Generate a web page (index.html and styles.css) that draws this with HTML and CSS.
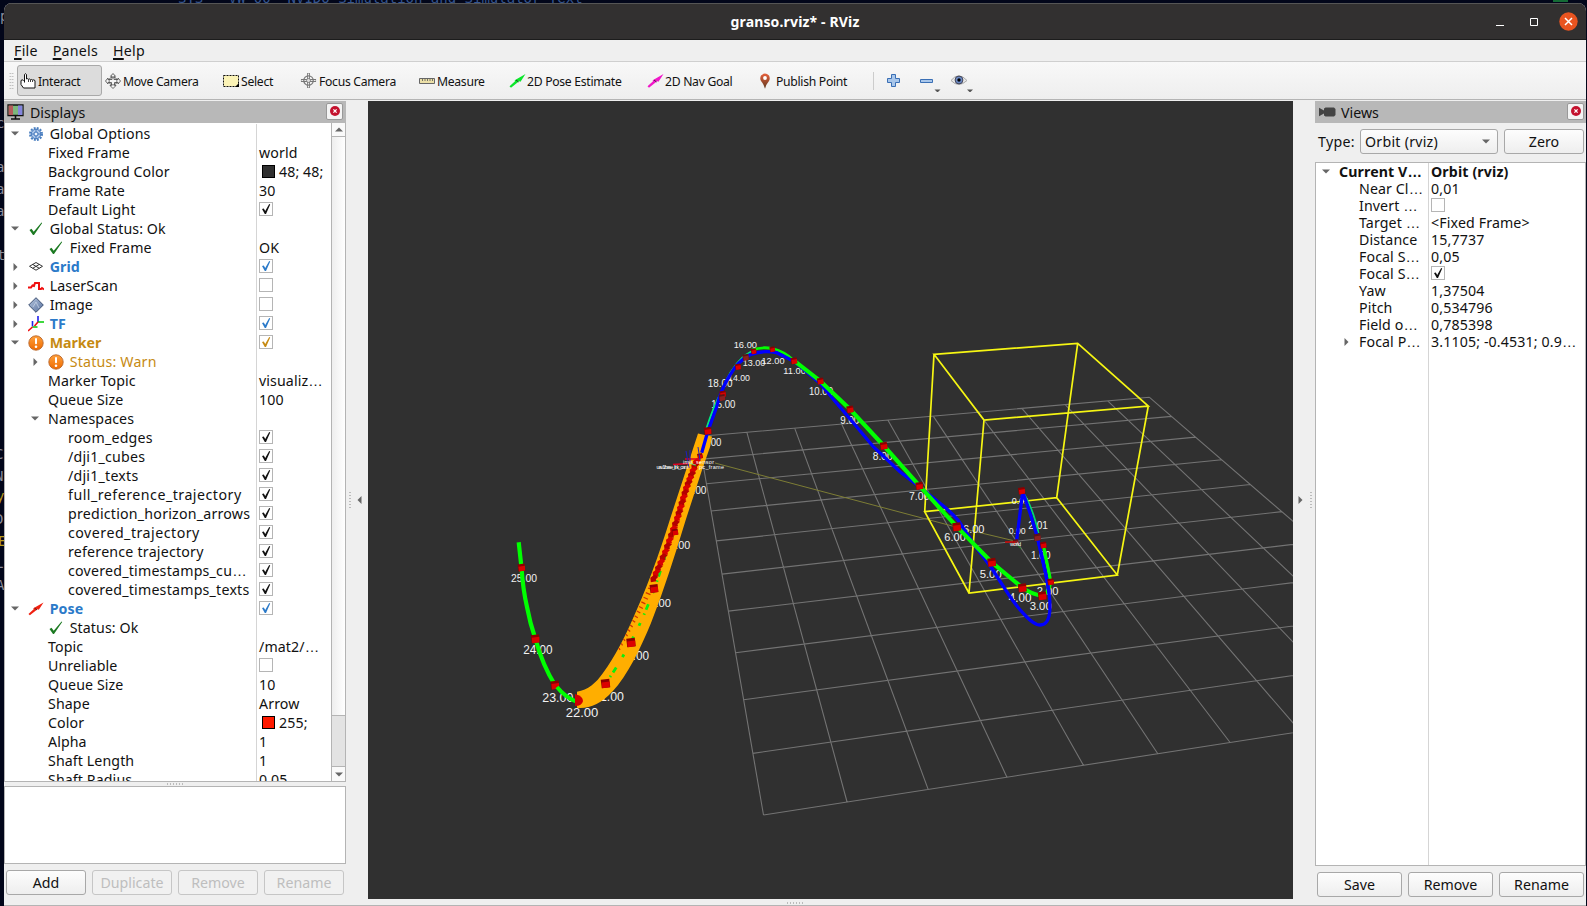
FILE: index.html
```html
<!DOCTYPE html>
<html lang="en">
<head>
<meta charset="utf-8">
<title>granso.rviz* - RViz</title>
<link rel="stylesheet" href="styles.css">
</head>
<body>
<svg class="defs" width="0" height="0">
  <defs>
    <linearGradient id="orange" x1="0" y1="0" x2="0" y2="1"><stop offset="0" stop-color="#ffa13d"/><stop offset="1" stop-color="#ee6a00"/></linearGradient>
    <linearGradient id="pin" x1="0" y1="0" x2="0" y2="1"><stop offset="0" stop-color="#e8603c"/><stop offset="1" stop-color="#5c3a20"/></linearGradient>
    <linearGradient id="gem" x1="0" y1="0" x2="1" y2="1"><stop offset="0" stop-color="#b8c8e0"/><stop offset="1" stop-color="#566f9c"/></linearGradient>
  </defs>
  <symbol id="down" viewBox="0 0 8 5"><path d="M0 .5h8L4 4.5z" fill="#666"/></symbol>
  <symbol id="right" viewBox="0 0 5 8"><path d="M.5 0v8L4.5 4z" fill="#666"/></symbol>
  <symbol id="tick" viewBox="0 0 14 14"><path d="M3 7l1.8-.6 1.4 2.6L10.2 2l1 .4L7 12H5.8z" fill="currentColor"/></symbol>
  <symbol id="ok" viewBox="0 0 16 16"><path d="M1.500 9l2-1.200 2.200 3L13.500 1.500l.7.6L6 14H5z" fill="#1c7a22"/></symbol>
  <symbol id="warn" viewBox="0 0 16 16"><circle cx="8" cy="8" r="7.200" fill="url(#orange)" stroke="#b8652a" stroke-width=".9"/><rect x="7" y="3" width="2" height="6.300" rx="1" fill="#fff"/><circle cx="8" cy="11.800" r="1.300" fill="#fff"/></symbol>
  <symbol id="gear" viewBox="0 0 16 16"><circle cx="8" cy="8" r="6" fill="none" stroke="#4a7fc0" stroke-width="2" stroke-dasharray="1.9 1.25"/><circle cx="8" cy="8" r="4.800" fill="#a9c4e8" stroke="#3f75bb"/><circle cx="8" cy="8" r="2" fill="#eef4fc" stroke="#3f75bb"/><path d="M8 3.400v2.600M8 10v2.600M3.400 8H6M10 8h2.600" stroke="#3f75bb" stroke-width=".8"/></symbol>
  <symbol id="grid" viewBox="0 0 16 16"><path d="M8 3.500l6.500 3.800L8 11.200 1.500 7.300zM4.700 5.400l6.600 3.900M11.300 5.400L4.700 9.300" fill="none" stroke="#333"/></symbol>
  <symbol id="laser" viewBox="0 0 16 16"><path d="M0 9.500h3l1.500-2 1.500.5 1-3h4v6h2l1-1 2 1.500" fill="none" stroke="#f01010" stroke-width="2"/></symbol>
  <symbol id="image" viewBox="0 0 16 16"><path d="M8 .7L15.300 8 8 15.300.7 8z" fill="url(#gem)" stroke="#3d5072"/><path d="M5 10l3-5 3 6" fill="none" stroke="#c4d0e4" stroke-width=".8"/></symbol>
  <symbol id="tf" viewBox="0 0 16 16"><path d="M4.500 5v5.500M10 0v6" stroke="#2222ee" stroke-width="1.600"/><path d="M4.500 11h5M10 6h6" stroke="#0c0" stroke-width="1.600"/><path d="M4.500 11L0 15M10 6l-3.500 4" stroke="#e11" stroke-width="1.600"/></symbol>
  <symbol id="arrow" viewBox="0 0 17 16"><path d="M.5 13.200l5.500-5-.3-1L16.500 1l-5 7.800-1.400-.6L2 14.700z" fill="currentColor"/><path d="M7 7l2.500 2" stroke="#222" stroke-width=".8"/></symbol>
  <symbol id="target" viewBox="0 0 18 18"><path d="M9 1v16M1 9h16" stroke="#777" stroke-width="3"/><path d="M9 1.500v15M1.500 9h15" stroke="#eee" stroke-width="1.200"/><circle cx="9" cy="9" r="5" fill="none" stroke="#777" stroke-width="1.300"/><circle cx="9" cy="9" r="2.200" fill="#ddd" stroke="#777"/></symbol>
  <symbol id="close" viewBox="0 0 10 10"><circle cx="5" cy="5" r="5" fill="#c4122e"/><path d="M3.400 3.400l3.200 3.200M6.600 3.400L3.400 6.600" stroke="#fff" stroke-width="1.300"/></symbol>
</svg>

<div class="desktop">
  <span class="code" style="left:0;top:8px">p</span>
  <span class="code" style="left:-4px;top:115px">c</span>
  <span class="code" style="left:-4px;top:159px">a</span>
  <span class="code" style="left:-4px;top:181px">a</span>
  <span class="code" style="left:-4px;top:203px">a</span>
  <span class="code" style="left:-3px;top:247px">t</span>
  <span class="code" style="left:-5px;top:446px">C</span>
  <span class="code" style="left:-5px;top:468px">N</span>
  <span class="code gold" style="left:-4px;top:488px">y</span>
  <span class="code" style="left:-5px;top:511px">D</span>
  <span class="code gold" style="left:-2px;top:533px">E</span>
  <span class="code" style="left:-5px;top:555px">L</span>
  <span class="code" style="left:-4px;top:577px">A</span>
  <span class="code topline">STS &nbsp; VW 00 &nbsp;NVIDO Simulation and Simulator Text</span>
  <span class="sliver"></span>
</div>

<div class="window">
  <header class="titlebar">
    <span class="title">granso.rviz* - RViz</span>
    <div class="controls">
      <svg width="8" height="12"><path d="M0 9.500h8" stroke="#fff"/></svg>
      <svg width="8" height="8"><path d="M.5.5h7v7h-7z" fill="none" stroke="#fff"/></svg>
      <svg width="19" height="19"><circle cx="9.500" cy="9.500" r="9.200" fill="#e95420"/><path d="M6 6l7 7M13 6l-7 7" stroke="#fff" stroke-width="1.500"/></svg>
    </div>
  </header>
  <nav class="menubar"><span><u>F</u>ile</span><span><u>P</u>anels</span><span><u>H</u>elp</span></nav>
  <div class="toolbar">
    <i class="grip"></i>
    <div class="tool on t1"><svg width="16" height="16"><path d="M4.500 9.500V1.500q1-1.600 2 0V6q1.200-.8 2 .3 1.300-.8 2 .4 1.200-.6 2 .3 1.400-.6 2.500.6V15H3.500L1 11.500V7.500l1.500-.8 1 1.300" fill="#fff" stroke="#111"/><path d="M8.500 6.500V9M10.500 7v2M12.500 7.300V9" stroke="#111" stroke-width=".8"/></svg><span>Interact</span></div>
    <div class="tool t2"><svg width="16" height="16"><path d="M8 .5l2.500 2.800H9v3.200h4V5l2.500 3L13 11V9.500H9.500v3H11L8 15.500 5 12.500h1.500v-3H3V11L.5 8 3 5v1.500h4V3.300H5.500z" fill="#f5f5f5" stroke="#555" stroke-width=".9"/><circle cx="8" cy="8" r="4" fill="none" stroke="#555" stroke-width=".8"/></svg><span>Move Camera</span></div>
    <div class="tool t3"><svg width="16" height="16"><path d="M.5 2.500h15v11H.5z" fill="#fbf3b6" stroke="#111" stroke-dasharray="2 1"/><path d="M16 10v4h-4z"/></svg><span>Select</span></div>
    <div class="tool t4"><svg width="17" height="17"><use href="#target"/></svg><span>Focus Camera</span></div>
    <div class="tool t5"><svg width="16" height="16"><path d="M.5 5.500h15v5H.5z" fill="#ece0a8" stroke="#666"/><path d="M3.500 6v2M6 6v2M8.500 6v2M11 6v2M13.500 6v2" stroke="#555" stroke-width=".8"/></svg><span>Measure</span></div>
    <div class="tool t6 green"><svg width="17" height="16"><use href="#arrow"/></svg><span>2D Pose Estimate</span></div>
    <div class="tool t7 pink"><svg width="17" height="16"><use href="#arrow"/></svg><span>2D Nav Goal</span></div>
    <div class="tool t8"><svg width="16" height="16"><path d="M8 15.800Q7 11.500 4 8 2.500 5.500 4 2.500 8-1.500 12 2.500 13.500 5.500 12 8 9 11.500 8 15.800z" fill="url(#pin)"/><circle cx="8" cy="5" r="1.900" fill="#fff"/></svg><span>Publish Point</span></div>
    <i class="sep"></i>
    <svg class="plus" width="13" height="13"><path d="M4.500.5h4v4h4v4h-4v4h-4v-4h-4v-4h4z" fill="#a8c6ea" stroke="#3a6fb5"/></svg>
    <svg class="minus" width="21" height="22"><path d="M.5 9.500h12v3H.500z" fill="#a8c6ea" stroke="#3a6fb5"/><path d="M14.500 19.500h6l-3 3z" fill="#555"/></svg>
    <svg class="eye" width="22" height="22"><path d="M0 10.500Q7.500 1 16 10.500 7.500 18.500 0 10.500z" fill="#e8e8e8" stroke="#aaa"/><circle cx="8" cy="10" r="3.900" fill="#6d8cc8" stroke="#445"/><circle cx="8" cy="10" r="1.700"/><path d="M16 19.500h6l-3 3z" fill="#555"/></svg>
  </div>

  <main class="work">
    <section class="dock displays">
      <div class="dockhead">
        <svg width="17" height="16"><path d="M1 1h15v10.500H1z" fill="#7db87d" stroke="#111" stroke-width="1.300"/><path d="M1.600 1.600H6V11H1.600z" fill="#b55c5c"/><path d="M11 1.600h4.400V11H11z" fill="#8585dd"/><path d="M8.500 12v2.500M4 15h9" stroke="#111" stroke-width="1.600"/></svg>
        <span>Displays</span>
        <b class="x"><svg width="10" height="10"><use href="#close"/></svg></b>
      </div>
      <div class="treebox">
        <div class="tree">
          <div class="row"><div class="n"><svg class="dn"><use href="#down"/></svg><svg class="ic"><use href="#gear"/></svg>Global Options</div><div class="v"></div></div>
          <div class="row"><div class="n c">Fixed Frame</div><div class="v">world</div></div>
          <div class="row"><div class="n c">Background Color</div><div class="v"><i class="sw dark"></i>48; 48;</div></div>
          <div class="row"><div class="n c">Frame Rate</div><div class="v">30</div></div>
          <div class="row"><div class="n c">Default Light</div><div class="v"><i class="cb"><svg><use href="#tick"/></svg></i></div></div>
          <div class="row"><div class="n"><svg class="dn"><use href="#down"/></svg><svg class="ic"><use href="#ok"/></svg>Global Status: Ok</div><div class="v"></div></div>
          <div class="row"><div class="n ci"><svg class="ic"><use href="#ok"/></svg>Fixed Frame</div><div class="v">OK</div></div>
          <div class="row blue"><div class="n"><svg class="rt"><use href="#right"/></svg><svg class="ic"><use href="#grid"/></svg>Grid</div><div class="v"><i class="cb"><svg><use href="#tick"/></svg></i></div></div>
          <div class="row"><div class="n"><svg class="rt"><use href="#right"/></svg><svg class="ic"><use href="#laser"/></svg>LaserScan</div><div class="v"><i class="cb"></i></div></div>
          <div class="row"><div class="n"><svg class="rt"><use href="#right"/></svg><svg class="ic"><use href="#image"/></svg>Image</div><div class="v"><i class="cb"></i></div></div>
          <div class="row blue"><div class="n"><svg class="rt"><use href="#right"/></svg><svg class="ic"><use href="#tf"/></svg>TF</div><div class="v"><i class="cb"><svg><use href="#tick"/></svg></i></div></div>
          <div class="row amber"><div class="n"><svg class="dn"><use href="#down"/></svg><svg class="ic"><use href="#warn"/></svg>Marker</div><div class="v"><i class="cb"><svg><use href="#tick"/></svg></i></div></div>
          <div class="row amber light"><div class="n in"><svg class="rt"><use href="#right"/></svg><svg class="ic"><use href="#warn"/></svg>Status: Warn</div><div class="v"></div></div>
          <div class="row"><div class="n c">Marker Topic</div><div class="v">visualiz<em>…</em></div></div>
          <div class="row"><div class="n c">Queue Size</div><div class="v">100</div></div>
          <div class="row"><div class="n in ns"><svg class="dn"><use href="#down"/></svg>Namespaces</div><div class="v"></div></div>
          <div class="row"><div class="n g">room_edges</div><div class="v"><i class="cb"><svg><use href="#tick"/></svg></i></div></div>
          <div class="row"><div class="n g">/dji1_cubes</div><div class="v"><i class="cb"><svg><use href="#tick"/></svg></i></div></div>
          <div class="row"><div class="n g">/dji1_texts</div><div class="v"><i class="cb"><svg><use href="#tick"/></svg></i></div></div>
          <div class="row"><div class="n g wide">full_reference_trajectory</div><div class="v"><i class="cb"><svg><use href="#tick"/></svg></i></div></div>
          <div class="row"><div class="n g">prediction_horizon_arrows</div><div class="v"><i class="cb"><svg><use href="#tick"/></svg></i></div></div>
          <div class="row"><div class="n g wide">covered_trajectory</div><div class="v"><i class="cb"><svg><use href="#tick"/></svg></i></div></div>
          <div class="row"><div class="n g">reference trajectory</div><div class="v"><i class="cb"><svg><use href="#tick"/></svg></i></div></div>
          <div class="row"><div class="n g">covered_timestamps_cu<em>…</em></div><div class="v"><i class="cb"><svg><use href="#tick"/></svg></i></div></div>
          <div class="row"><div class="n g">covered_timestamps_texts</div><div class="v"><i class="cb"><svg><use href="#tick"/></svg></i></div></div>
          <div class="row blue"><div class="n"><svg class="dn"><use href="#down"/></svg><svg class="ic red"><use href="#arrow"/></svg>Pose</div><div class="v"><i class="cb"><svg><use href="#tick"/></svg></i></div></div>
          <div class="row"><div class="n ci"><svg class="ic"><use href="#ok"/></svg>Status: Ok</div><div class="v"></div></div>
          <div class="row"><div class="n c">Topic</div><div class="v">/mat2/<em>…</em></div></div>
          <div class="row"><div class="n c">Unreliable</div><div class="v"><i class="cb"></i></div></div>
          <div class="row"><div class="n c">Queue Size</div><div class="v">10</div></div>
          <div class="row"><div class="n c">Shape</div><div class="v">Arrow</div></div>
          <div class="row"><div class="n c">Color</div><div class="v"><i class="sw redsw"></i>255;</div></div>
          <div class="row"><div class="n c">Alpha</div><div class="v">1</div></div>
          <div class="row"><div class="n c">Shaft Length</div><div class="v">1</div></div>
          <div class="row"><div class="n c">Shaft Radius</div><div class="v">0,05</div></div>
        </div>
        <div class="scroll"><div class="sb"><svg width="8" height="5" class="flip"><use href="#down"/></svg></div><div class="track"></div><div class="handle"></div><div class="sb bot"><svg width="8" height="5"><use href="#down"/></svg></div></div>
      </div>
      <div class="split"><i></i></div>
      <div class="info"></div>
      <div class="buttons"><button>Add</button><button disabled>Duplicate</button><button disabled>Remove</button><button disabled>Rename</button></div>
    </section>
    <div class="gutter left"><i></i><svg width="5" height="8" class="mirror"><use href="#right"/></svg></div>
    <svg class="scene" viewBox="368 101 925 798" width="925" height="798">
      <g id="gridlines" stroke="#737373" stroke-width="1.100" fill="none"></g>
      <path d="M715 463L956 527L1015 541" stroke="#7d7d35" fill="none"/>
      <g stroke="#f6f613" stroke-width="1.700" fill="none">
        <path d="M934 354.300L1077.700 343.300 1148.300 406 984 420zM924.700 511.700L1056.700 497.700 1117.300 575 969 593zM934 354.300L924.700 511.700M1077.700 343.300L1056.700 497.700M1148.300 406L1117.300 575M984 420L969 593"/>
      </g>
      <g id="labels" fill="#f2f2f2"></g>
      <path d="M577 691.700C588 690 596 683 603 673 616 655 623 640 630.500 624 646 590 658 558 670.700 517L698 433.500 712 436.500 710 447 702 470 685.700 520C675 555 664 590 651 623 641 647 628 675 612 692 601 704 589 709 577 707.800z" fill="#ffae00"/>
      <g stroke="#0cf00c" fill="none" stroke-width="2.800" stroke-dasharray="1.500 4 6 12 3 9">
        <path d="M610 677Q645 625 665 556"/>
      </g>
      <g id="chain"></g>
      <path d="M518.700 542.300L521.500 567.700Q523 590 527 607 530 623 535.300 638.700 543 666 555 685" stroke="#0f0" stroke-width="4.200" fill="none"/>
      <path d="M706 430Q714 405 721 393 729 370 744 356L753 350.500" stroke="#00e880" stroke-width="2" fill="none"/>
      <path d="M752 350Q762 346.500 772 348.500 784 351 794 360.700" stroke="#0f0" stroke-width="2.800" fill="none"/>
      <path d="M1022 491Q1032 505 1038.500 533" stroke="#00d870" stroke-width="1.800" fill="none"/>
      <path d="M1043.300 545L1050.700 581.700Q1049 593 1042.300 595.700" stroke="#0f0" stroke-width="3.300" fill="none"/>
      <path d="M701.700 452.700L707.700 431.700 716.700 406.700Q721 389 730 375 738 361 750 354.700 762 350 776.700 352.700L794 361.300 820 383.300 836.700 403.300 853.300 422.700 873.300 446.700 900 471.700 919.300 486.700 940 503.300Q950 511 958 520L973 543 991.700 568.300 1006.700 591.700Q1016 606 1023.300 613.300 1031 622 1037 624.500 1050 628 1050 606 1050 595 1045.700 573.300L1037.300 536.700 1030 513 1022.700 491.700 1016.700 540" stroke="#00f" stroke-width="3.300" fill="none"/>
      <path d="M794 360.700L820.300 381 850 409.300 884 446 919.300 485.700 956.700 526.700 991.700 562.300 1022.300 587.700Q1031 594 1042.300 596" stroke="#0f0" stroke-width="4.100" fill="none"/>
      <path d="M1044.500 553L1050 577" stroke="#0f0" stroke-width="2.500"/>
      <path d="M1037.300 537L1045.700 573.300 1049 593" stroke="#00f" stroke-width="3.200" fill="none"/>
      <g id="cubes"></g>
      <path d="M557 687Q565 697 576 701.500" stroke="#0f0" stroke-width="4" fill="none"/>
      <path d="M575 694Q583 696 583 701 582 706 575 706z" fill="#d00000"/>
      <path d="M1005 542h10" stroke="#c00" stroke-width="1.500"/><path d="M1016 543l5 6" stroke="#1a7a1a"/>
      <g class="frames"><path d="M673 464.500l16-1M685 459h14" stroke="#e00020" stroke-width="1.600"/><path d="M686 451l3 17M690 450v12M698 447l2 13" stroke="#2020c0"/><path d="M690 463l6 3" stroke="#18b018"/>
        <text x="656.500" y="469" textLength="32">uav1/base_link_cam</text><text x="699" y="469" textLength="25">pc_frame</text><text x="683" y="464" textLength="31">imu_sensor</text><text x="1010" y="546" textLength="11">world</text></g>
    </svg>
    <div class="gutter right"><svg width="5" height="8"><use href="#right"/></svg><i></i></div>
    <section class="dock views">
      <div class="dockhead"><svg width="17" height="10"><path d="M0 .8l5 2.700V1.500L6.500.5H15l1.500 1.500v6L15 9.500H6.500L5 8.500v-2L0 9.200z" fill="#444"/></svg><span>Views</span><b class="x"><svg width="10" height="10"><use href="#close"/></svg></b></div>
      <div class="typerow"><span>Type:</span><div class="combo">Orbit (rviz)<svg width="8" height="5"><use href="#down"/></svg></div><button>Zero</button></div>
      <div class="vtree">
        <div class="row bold"><div class="n"><svg class="dn"><use href="#down"/></svg>Current V<em>…</em></div><div class="v">Orbit (rviz)</div></div>
        <div class="row"><div class="n c">Near Cl<em>…</em></div><div class="v">0,01</div></div>
        <div class="row"><div class="n c">Invert&nbsp;<em>…</em></div><div class="v"><i class="cb"></i></div></div>
        <div class="row"><div class="n c">Target&nbsp;<em>…</em></div><div class="v">&lt;Fixed Frame&gt;</div></div>
        <div class="row"><div class="n c">Distance</div><div class="v">15,7737</div></div>
        <div class="row"><div class="n c">Focal S<em>…</em></div><div class="v">0,05</div></div>
        <div class="row"><div class="n c">Focal S<em>…</em></div><div class="v"><i class="cb"><svg><use href="#tick"/></svg></i></div></div>
        <div class="row"><div class="n c">Yaw</div><div class="v">1,37504</div></div>
        <div class="row"><div class="n c">Pitch</div><div class="v">0,534796</div></div>
        <div class="row"><div class="n c">Field o<em>…</em></div><div class="v">0,785398</div></div>
        <div class="row"><div class="n in"><svg class="rt"><use href="#right"/></svg>Focal P<em>…</em></div><div class="v">3.1105; -0.4531; 0.9<em>…</em></div></div>
        <div class="rest"><div class="n"></div><div class="v"></div></div>
      </div>
      <div class="buttons"><button>Save</button><button>Remove</button><button>Rename</button></div>
    </section>
  </main>
  <footer class="status"><i></i></footer>
</div>
<script src="scene.js"></script>
</body>
</html>
```
FILE: styles.css
```css
* { box-sizing: border-box; }
body { margin: 0; width: 1587px; height: 906px; overflow: hidden; background: #02061a; font-family: "Noto Sans", "Open Sans", sans-serif; font-size: 14.2px; color: #111; }
.defs { position: absolute; }
.desktop { position: absolute; inset: 0; overflow: hidden; }
.code { position: absolute; font: 14px/17px "DejaVu Sans Mono", monospace; color: #8a8d9c; }
.gold { color: #b99a1c; }
.topline { left: 178px; top: -10px; color: #35558f; white-space: pre; }
.sliver { position: absolute; left: 1553px; top: 0; width: 15px; height: 2px; background: #146b35; }
.window { position: relative; margin: 3px 1px 0 4px; height: 903px; border-radius: 8px 8px 0 0; overflow: hidden; background: #efefef; display: flex; flex-direction: column; }
.titlebar { height: 37px; flex: none; background: #323030; border-top: 1px solid #555; border-bottom: 1px solid #1c1c1c; display: grid; grid-template-columns: 1fr; align-items: center; }
.title { grid-area: 1/1; text-align: center; color: #fff; font-weight: 700; font-size: 14px; letter-spacing: .15px; padding-right: 0; }
.controls { grid-area: 1/1; justify-self: end; display: flex; align-items: center; gap: 25px; padding-right: 8px; }
.controls svg:nth-child(1) { margin-right: 1px; }
.controls svg:nth-child(2) { margin-right: -4px; }
.controls svg:nth-child(1), .controls svg:nth-child(2) { flex: none; }
.menubar { height: 22px; flex: none; border-bottom: 1px solid #cfcfcf; display: flex; gap: 15px; padding-left: 10px; line-height: 21px; letter-spacing: .25px; }
.menubar u { text-underline-offset: 2px; text-decoration-thickness: 1.500px; }
.toolbar { height: 38px; flex: none; display: flex; align-items: center; border-bottom: 1px solid #b4b4b4; background: linear-gradient(#f8f8f8, #eeeeee); font-size: 12.2px; letter-spacing: -.3px; }
.grip { width: 5px; height: 17px; margin-left: 5px; background: radial-gradient(circle, #b5b5b5 .7px, transparent .9px) 0 0/2.500px 3px; }
.tool { height: 31px; display: flex; align-items: center; gap: 2px; white-space: nowrap; flex: none; padding-left: 2px; border: 1px solid transparent; }
.tool.on { background: #dcdcdc; border-color: #a9a9a9; border-radius: 3px; }
.t1 { width: 85px; margin-left: 3px; }
.t2 { width: 118px; }
.t3 { width: 77px; }
.t4 { width: 119px; }
.t5 { width: 90px; }
.t6 { width: 138px; gap: 1px; }
.t7 { width: 110px; gap: 1px; }
.t8 { width: 119px; gap: 3px; }
.green { color: #0ce62c; } .pink { color: #f018c8; }
.tool span { color: #111; padding-top: 1px; }
.sep { width: 1px; height: 18px; background: #ccc; }
.plus { margin-left: 13px; flex: none; }
.minus { margin-left: 20px; flex: none; }
.eye { margin-left: 10px; flex: none; }
.work { flex: 1; display: flex; min-height: 0; }
.dock { display: flex; flex-direction: column; flex: none; padding-top: 1px; }
.displays { width: 342px; }
.views { width: 271px; }
.dockhead { height: 22px; flex: none; background: #b8b8b8; display: flex; align-items: center; gap: 5px; padding-left: 3px; padding-right: 3px; }
.displays .dockhead span { padding-left: 1px; }
.views .dockhead { padding-right: 2px; padding-left: 4px; }
.x { margin: -2px 0 0 auto; width: 17px; height: 17px; background: #f4f4f4; border: 1px solid #999; border-radius: 2px; display: grid; place-items: center; }
.treebox { height: 659px; flex: none; display: flex; border: 1px solid #b4b4b4; border-top: 0; background: #fff; }
.tree { flex: 1; overflow: hidden; padding-top: 1px; }
.row { display: flex; height: 19px; line-height: 19px; white-space: nowrap; letter-spacing: .1px; }
.row em { font-family: "Liberation Sans", sans-serif; font-style: normal; font-size: 14.500px; letter-spacing: 0; padding-top: 1px; }
.n { width: 252px; border-right: 1px solid #d5d5d5; display: flex; align-items: center; flex: none; }
.v { padding-left: 2px; display: flex; align-items: center; }
.n.c { padding-left: 43px; }
.n.ci { padding-left: 42.500px; }
.n.g { padding-left: 63px; letter-spacing: .22px; }
.n.g.wide { letter-spacing: .5px; }
.n.in { padding-left: 20px; }
.dn { width: 8px; height: 5px; margin: 0 8.500px 0 6px; flex: none; }
.rt { width: 5px; height: 8px; margin: 0 9.500px 0 8px; flex: none; }
.ic { width: 16px; height: 16px; margin-right: 6.200px; flex: none; }
.ns .dn { margin-right: 9px; }
.red { color: #f02010; }
.cb { width: 14px; height: 14px; border: 1px solid #b5b5b5; background: #fff; display: block; margin-top: -1px; }
.cb svg { width: 14px; height: 14px; display: block; margin: -1px; }
.sw { width: 13px; height: 13px; border: 1px solid #000; margin: 0 4px 0 3px; }
.dark { background: #303030; } .redsw { background: #ff1a00; }
.blue { color: #2b7ac9; font-weight: 700; }
.amber { color: #c68a12; font-weight: 700; letter-spacing: -.05px; }
.light { font-weight: 400; letter-spacing: .2px; }
.bold { font-weight: 700; }
.scroll { width: 14px; border-left: 1px solid #b4b4b4; display: flex; flex-direction: column; background: #fafafa; }
.sb { height: 14px; display: grid; place-items: center; border-bottom: 1px solid #b4b4b4; }
.sb.bot { border-bottom: 0; }
.flip { transform: scaleY(-1); } .mirror { transform: scaleX(-1); }
.track { flex: 1; background: linear-gradient(90deg, #eee, #fff); }
.handle { height: 52px; background: #e3e3e3; border: solid #b4b4b4; border-width: 1px 0; }
.split { height: 4px; flex: none; display: grid; place-items: center; }
.split i, .status i { width: 17px; height: 2px; background: repeating-linear-gradient(90deg, #bbb 0 1px, transparent 1px 3px); }
.info { height: 78px; flex: none; border: 1px solid #b4b4b4; background: #fff; }
.buttons { display: flex; gap: 6px; padding: 6px 2px 0; }
button { flex: 1; height: 25px; padding: 0; font: inherit; color: #111; border: 1px solid #a8a8a8; border-radius: 3px; background: linear-gradient(#fdfdfd, #eeeeee); }
button:disabled { color: #bebebe; border-color: #c6c6c6; background: #f1f1f1; }
.gutter { width: 22px; flex: none; display: flex; align-items: center; justify-content: space-between; padding: 0 6px 0 3px; }
.gutter i { width: 2px; height: 17px; background: repeating-linear-gradient(#bbb 0 1px, transparent 1px 3px); }
.gutter.right { padding: 0 3px 0 5px; }
.scene { display: block; flex: none; background: #303030; margin-top: 1px; font-family: "Liberation Sans", sans-serif; }
.frames text { font-size: 5.500px; fill: #fff; }
.typerow { display: flex; align-items: center; height: 25px; margin: 6px 2px 8px 3px; flex: none; }
.typerow span { width: 42px; letter-spacing: .3px; }
.typerow button { flex: none; width: 80px; margin-left: 6px; }
.combo { width: 138px; height: 25px; border: 1px solid #a8a8a8; border-radius: 3px; background: linear-gradient(#fdfdfd, #eee); display: flex; align-items: center; justify-content: space-between; padding: 0 7px 0 4px; letter-spacing: .25px; }
.vtree { height: 704px; flex: none; border: 1px solid #b4b4b4; background: #fff; display: flex; flex-direction: column; padding-top: 0; }
.vtree .row { height: 17px; line-height: 17px; }
.vtree .row:first-child { line-height: 20px; }
.vtree .v { letter-spacing: .13px; }
.vtree .n { width: 113px; }
.vtree .n.c { padding-left: 43px; }
.vtree .dn { margin-right: 9px; }
.vtree .rt { margin-right: 10px; }
.rest { flex: 1; display: flex; }
.views .buttons { padding-top: 6px; }
.status { height: 6px; flex: none; border-bottom: 1px solid #b4b4b4; display: grid; place-items: center; }
```
FILE: scene.js
```js
const NS = 'http://www.w3.org/2000/svg';
function add(parent, tag, attrs, text) {
  const e = document.createElementNS(NS, tag);
  for (const k in attrs) e.setAttribute(k, attrs[k]);
  if (text) e.textContent = text;
  parent.appendChild(e);
  return e;
}
const byId = id => document.getElementById(id);

// Ground plane: a 10x10 grid projected through the camera onto four corners.
const [p0, p1, p2, p3] = [[763.5, 815], [1500.3, 700.5], [1149.5, 397.3], [698.3, 436.5]];
const dx1 = p1[0] - p2[0], dx2 = p3[0] - p2[0], sx = p0[0] - p1[0] + p2[0] - p3[0];
const dy1 = p1[1] - p2[1], dy2 = p3[1] - p2[1], sy = p0[1] - p1[1] + p2[1] - p3[1];
const det = dx1 * dy2 - dx2 * dy1;
const g = (sx * dy2 - dx2 * sy) / det, h = (dx1 * sy - sx * dy1) / det;
function project(u, v) {
  const w = g * u + h * v + 1;
  return [0, 1].map(i => ((p1[i] - p0[i] + g * p1[i]) * u + (p3[i] - p0[i] + h * p3[i]) * v + p0[i]) / w);
}
let d = '';
for (let i = 0; i <= 10; i++) {
  const t = i / 10;
  d += `M${project(t, 0)}L${project(t, 1)}M${project(0, t)}L${project(1, t)}`;
}
add(byId('gridlines'), 'path', { d });

// Time stamps: text, left, baseline, width.
[['25.00', 511, 582, 26], ['24.00', 523.3, 654.3, 29.3], ['23.00', 542.3, 701.7, 31], ['22.00', 565.7, 717, 32.7],
 ['21.00', 593, 700.7, 31], ['20.00', 619.5, 660.3, 29.5], ['19.00', 643, 607, 28], ['18.00', 663.3, 548.7, 27],
 ['17.00', 681, 493.7, 25.5], ['16.00', 697.3, 446, 24], ['15.00', 711.3, 407.7, 24], ['18.00', 707.7, 387.3, 24.7],
 ['14.00', 728, 381, 22], ['13.00', 742.7, 365.7, 22.5], ['12.00', 761.5, 364, 23], ['16.00', 733.7, 347.7, 23.3],
 ['11.00', 783.3, 374.3, 22.7], ['10.00', 809, 395, 24], ['9.00', 840.3, 424, 19], ['8.00', 872.7, 460.3, 20],
 ['7.00', 909, 500.3, 20.5], ['6.00', 944.3, 541.3, 21.5], ['6.00', 963, 532.7, 21.5], ['5.00', 979.7, 577.7, 22],
 ['4.00', 1008.7, 602, 22.7], ['3.00', 1029.7, 610, 22], ['2.00', 1036.7, 595.3, 21.7], ['1.00', 1031, 559.3, 19.5],
 ['2.01', 1028.3, 529, 19.7], ['0.00', 1008.7, 534, 17], ['0.01', 1011.7, 504, 17.5]
].forEach(([s, x, y, w]) => add(byId('labels'), 'text',
  { x, y, 'font-size': w / (s.length === 5 ? 2.4 : 1.86), textLength: w, lengthAdjust: 'spacingAndGlyphs' }, s));

// Prediction horizon arrows: overlapping heads, then thin shafts further down.
const spine = [[697, 461], [687, 487], [678, 517], [666, 551], [652, 583]];
for (let s = 0; s < 4; s++) for (let k = 0; k < 6; k++) {
  const t = k / 6, x = spine[s][0] + (spine[s + 1][0] - spine[s][0]) * t, y = spine[s][1] + (spine[s + 1][1] - spine[s][1]) * t;
  add(byId('chain'), 'path', { d: `M${x - 4} ${y}l4 -3 4 2 -2.500 2.500 .5 2 -5.500 1z`, fill: k % 2 ? '#b40000' : '#d80000' });
}
for (let k = 0; k < 14; k++) {
  const t = k / 13;
  add(byId('chain'), 'path', { d: `M${648 - 29 * t} ${588 + 60 * t}l${5 - 4 * t} 2`, stroke: '#d03000', 'stroke-width': 1.2 });
}

// Way-point cubes: centre, size, dimmed flag.
[[521.5, 567.5, 8], [535.3, 638.7, 9], [555, 685, 9], [605.5, 683.5, 9.5], [631, 642.5, 9.5], [654, 588.5, 9], [675, 532, 7],
 [707.7, 430.7, 8], [722.7, 394, 7], [722, 397.5, 7, 1], [738, 366.7, 6.5], [745.7, 357.3, 7, 1], [753.7, 351.3, 6],
 [772.3, 349.3, 6], [794, 360.7, 7], [820.3, 381, 7], [850, 409.3, 7.5], [883.7, 445.7, 8], [919.3, 485.7, 8], [956.7, 526.7, 9],
 [991.7, 562.3, 9], [1022.3, 587.7, 9], [1042.3, 595.7, 9], [1021.7, 490.7, 7.5], [1037.3, 537.3, 7.5, 1],
 [1043.3, 545, 7], [1050.7, 581.7, 7], [1015.7, 542, 6, 1], [700, 456, 6]
].forEach(([x, y, s, dim]) => {
  const c = byId('cubes'), a = s / 2;
  add(c, 'path', { d: `M${x - a} ${y - a + 1}l${s - 1} -1 1 ${s - 1} -${s - 1} 1z`, fill: dim ? '#5c1414' : '#8c0000' });
  add(c, 'path', { d: `M${x - a + 1} ${y - a + s * .4}l${s - 1.5} -1 0 ${s * .6} -${s - 2} 1z`, fill: dim ? '#8c2020' : '#dc0000' });
});
```
